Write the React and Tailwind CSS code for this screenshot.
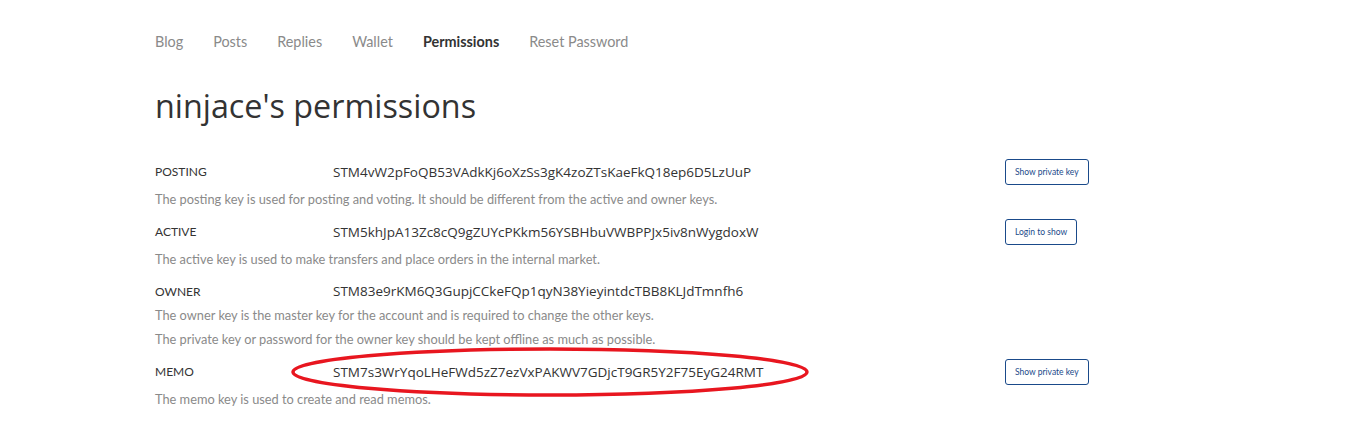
import React from "react";

const rows = [
  {
    label: "POSTING",
    key: "STM4vW2pFoQB53VAdkKj6oXzSs3gK4zoZTsKaeFkQ18ep6D5LzUuP",
    desc: ["The posting key is used for posting and voting. It should be different from the active and owner keys."],
    button: "Show private key",
  },
  {
    label: "ACTIVE",
    key: "STM5khJpA13Zc8cQ9gZUYcPKkm56YSBHbuVWBPPJx5iv8nWygdoxW",
    desc: ["The active key is used to make transfers and place orders in the internal market."],
    button: "Login to show",
  },
  {
    label: "OWNER",
    key: "STM83e9rKM6Q3GupjCCkeFQp1qyN38YieyintdcTBB8KLJdTmnfh6",
    desc: [
      "The owner key is the master key for the account and is required to change the other keys.",
      "The private key or password for the owner key should be kept offline as much as possible.",
    ],
    button: null,
  },
  {
    label: "MEMO",
    key: "STM7s3WrYqoLHeFWd5zZ7ezVxPAKWV7GDjcT9GR5Y2F75EyG24RMT",
    desc: ["The memo key is used to create and read memos."],
    button: "Show private key",
    circled: true,
  },
];

const nav = ["Blog", "Posts", "Replies", "Wallet", "Permissions", "Reset Password"];

export default function App() {
  return (
    <div className="min-h-[440px] bg-white pl-[155px] pt-[31px]" style={{ fontFamily: "Lato, 'Noto Sans', sans-serif" }}>
      <nav className="flex gap-[30px] text-[14.4px] leading-[22px]">
        {nav.map((n) => (
          <span key={n} className={n === "Permissions" ? "font-bold text-[#333]" : "text-[#8a8a8a]"}>
            {n}
          </span>
        ))}
      </nav>
      <h1
        className="mt-[30px] text-[32.3px] leading-[44px] text-[#333]"
        style={{ fontFamily: "'Open Sans', 'Noto Sans', sans-serif" }}
      >
        ninjace's permissions
      </h1>
      <div className="mt-[30px]">
        {rows.map((r) => (
          <div key={r.label} className={r.button ? "mb-[6px]" : "mb-[6px]"}>
            <div className={"flex items-center " + (r.button ? "h-[30px]" : "h-[26px] pt-[3px]")}>
              <div className="w-[178px] shrink-0 text-[12px] text-[#333]">{r.label}</div>
              <div
                className="relative w-[672px] shrink-0 text-[13.5px] text-[#333]"
                style={{ fontFamily: "'Open Sans', 'Noto Sans', sans-serif" }}
              >
                {r.key}
                {r.circled && (
                  <svg
                    className="pointer-events-none absolute left-[-43px] top-1/2 -translate-y-1/2"
                    width="520"
                    height="52"
                    viewBox="0 0 520 52"
                  >
                    <ellipse cx="260" cy="26" rx="257" ry="23" fill="none" stroke="#e8161f" strokeWidth="3.5" />
                  </svg>
                )}
              </div>
              {r.button && (
                <button className="h-[26px] rounded-[3px] border border-[#1a4a8a] px-[9px] text-[8.5px] text-[#1a4a8a]">
                  {r.button}
                </button>
              )}
            </div>
            {r.desc.map((d) => (
              <div key={d} className="text-[12.8px] leading-[24px] text-[#8a8a8a]">
                {d}
              </div>
            ))}
          </div>
        ))}
      </div>
    </div>
  );
}
